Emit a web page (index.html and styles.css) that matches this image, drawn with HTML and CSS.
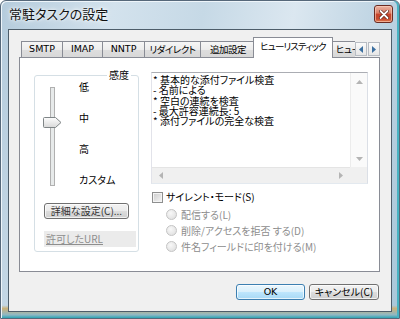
FILE: index.html
```html
<!DOCTYPE html>
<html lang="ja">
<head>
    <meta charset="UTF-8">
    <title>常駐タスクの設定</title>
    <link rel="stylesheet" href="styles.css">
</head>
<body>
    <div class="window">
        <div class="titlebar">
            <span class="title">常駐タスクの設定</span>
            <div class="close">
                <svg width="10" height="9" viewBox="0 0 10 9">
                    <path d="M1.5 1 L8.5 8 M8.5 1 L1.5 8" stroke="#5a1d12" stroke-width="3.2" stroke-linecap="round"/>
                    <path d="M1.5 1 L8.5 8 M8.5 1 L1.5 8" stroke="#fff" stroke-width="1.8" stroke-linecap="round"/>
                </svg>
            </div>
        </div>
        <div class="client">
            <div class="tabrow">
                <div class="tabstrip">
                    <div class="tab latin w-smtp">SMTP</div>
                    <div class="tab latin w-imap">IMAP</div>
                    <div class="tab latin w-nntp">NNTP</div>
                    <div class="tab w-redirect">リダイレクト</div>
                    <div class="tab w-extra">追加設定</div>
                    <div class="tab active">ヒューリスティック</div>
                    <div class="tab cut">ヒュー</div>
                </div>
                <div class="tabscroll">
                    <div class="scrollbtn"><svg width="4" height="7" viewBox="0 0 4 7"><path d="M4 0 L0 3.5 L4 7 Z" fill="#3b6fa0"/></svg></div>
                    <div class="scrollbtn"><svg width="4" height="7" viewBox="0 0 4 7"><path d="M0 0 L4 3.5 L0 7 Z" fill="#3b6fa0"/></svg></div>
                </div>
            </div>
            <div class="panel">
                <div class="leftcol">
                    <div class="group">
                        <span class="group-label">感度</span>
                        <div class="slider">
                            <div class="track">
                                <svg class="thumb" width="19" height="11" viewBox="0 0 19 11">
                                    <defs>
                                        <linearGradient id="tg" x1="0" y1="0" x2="0" y2="1">
                                            <stop offset="0" stop-color="#fdfdfd"/>
                                            <stop offset="1" stop-color="#d9d9d9"/>
                                        </linearGradient>
                                    </defs>
                                    <path d="M1.5 0.5 H12.5 L18 5.5 L12.5 10.5 H1.5 Q0.5 10.5 0.5 9.5 V1.5 Q0.5 0.5 1.5 0.5 Z" fill="url(#tg)" stroke="#7f8587"/>
                                </svg>
                            </div>
                            <div class="levels">
                                <span>低</span>
                                <span>中</span>
                                <span>高</span>
                                <span>カスタム</span>
                            </div>
                        </div>
                        <div class="btn small">詳細な設定(C)...</div>
                        <div class="urlbox"><span>許可したURL</span></div>
                    </div>
                </div>
                <div class="rightcol">
                    <div class="listbox">
                        <div class="listtext">* 基本的な添付ファイル検査
- 名前による
* 空白の連続を検査
- 最大許容連続長: 5
* 添付ファイルの完全な検査</div>
                        <div class="vscroll">
                            <svg width="7" height="4" viewBox="0 0 7 4"><path d="M0 4 L3.5 0 L7 4 Z" fill="#b4b4b4"/></svg>
                            <svg width="7" height="4" viewBox="0 0 7 4"><path d="M0 0 L3.5 4 L7 0 Z" fill="#b4b4b4"/></svg>
                        </div>
                        <div class="hscroll">
                            <svg width="4" height="7" viewBox="0 0 4 7"><path d="M4 0 L0 3.5 L4 7 Z" fill="#b4b4b4"/></svg>
                            <svg width="4" height="7" viewBox="0 0 4 7"><path d="M0 0 L4 3.5 L0 7 Z" fill="#b4b4b4"/></svg>
                        </div>
                        <div class="corner"></div>
                    </div>
                    <label class="check">
                        <span class="checkbox"></span>
                        <span>サイレント・モード(S)</span>
                    </label>
                    <div class="radios">
                        <div class="radio"><span class="dot"></span>配信する(L)</div>
                        <div class="radio"><span class="dot"></span>削除/アクセスを拒否 する(D)</div>
                        <div class="radio"><span class="dot"></span>件名フィールドに印を付ける(M)</div>
                    </div>
                </div>
            </div>
            <div class="buttons">
                <div class="btn default">OK</div>
                <div class="btn">キャンセル(C)</div>
            </div>
        </div>
    </div>
</body>
</html>
```

FILE: styles.css
```css
* {
    box-sizing: border-box;
    margin: 0;
    padding: 0;
}

body {
    width: 400px;
    height: 319px;
    overflow: hidden;
    font-family: "Noto Sans CJK JP", sans-serif;
    font-size: 10px;
    font-feature-settings: "palt";
    color: #000;
    background: #fff;
}

.window {
    width: 400px;
    height: 319px;
    display: flex;
    flex-direction: column;
    padding: 0 7px 6px 7px;
    border: 1px solid #56687a;
    border-radius: 6px 6px 0 0;
    background:
        linear-gradient(to bottom, rgba(255, 255, 255, 0) 96%, #c9b27c 97%, #8fb8c4 99%, #2ea4b4 100%),
        linear-gradient(100deg, #b4cbdc 0%, #d3e2ed 25%, #c6d9e6 45%, #dbe7f0 65%, #bdd3e2 85%, #a9c7d9 100%);
    box-shadow: inset -2px 0 0 #47b3c3, inset 1px 1px 0 #eef5fa;
}

.titlebar {
    height: 28px;
    margin: 0 -7px;
    padding: 4px 6px 0 8px;
    display: flex;
    justify-content: space-between;
    align-items: flex-start;
}

.title {
    font-size: 13px;
    line-height: 17px;
    color: #111;
    text-shadow: 0 0 6px #fff, 0 0 3px #fff;
}

.close {
    width: 19px;
    height: 18px;
    border: 1px solid #6b2b22;
    border-radius: 3px;
    background: linear-gradient(to bottom, #eab3a3 0%, #d97e66 45%, #c7442b 50%, #c54a2f 80%, #e07a4e 100%);
    box-shadow: inset 0 0 0 1px rgba(255, 210, 190, 0.6);
    display: flex;
    align-items: center;
    justify-content: center;
}

.client {
    flex: 1;
    border: 1px solid #4d5d6a;
    background: #f0f0f0;
    padding: 7px 11px 0 10px;
    display: flex;
    flex-direction: column;
}

.tabrow {
    display: flex;
    align-items: flex-end;
    height: 21px;
    position: relative;
    z-index: 1;
}

.tabstrip {
    flex: 1;
    display: flex;
    align-items: flex-end;
    height: 21px;
    padding-left: 2px;
    overflow: hidden;
}

.tab {
    flex-shrink: 0;
    height: 16px;
    margin-bottom: 1px;
    margin-left: -1px;
    border: 1px solid #898c95;
    border-bottom: none;
    background: linear-gradient(to bottom, #f6f6f6 0%, #ececec 50%, #dedede 51%, #d8d8d8 100%);
    font-size: 9.5px;
    letter-spacing: -0.5px;
    line-height: 14px;
    text-align: center;
    white-space: nowrap;
}

.tab:first-child {
    margin-left: 0;
}

.tab.latin {
    font-family: "DejaVu Sans", "Noto Sans CJK JP", sans-serif;
    letter-spacing: 0;
}

.w-smtp { width: 42px; }
.w-imap { width: 41px; }
.w-nntp { width: 43px; }
.w-redirect { width: 57px; }
.w-extra { width: 56px; }

.tab.active {
    width: 80px;
    height: 21px;
    margin: 0 -2px 0 -3px;
    background: #fff;
    line-height: 17px;
    letter-spacing: -0.9px;
    position: relative;
    z-index: 2;
}

.tab.cut {
    width: 40px;
    text-align: left;
    padding-left: 5px;
}

.tabscroll {
    display: flex;
    gap: 1px;
    margin: 0 0 2px 0;
}

.scrollbtn {
    width: 12px;
    height: 14px;
    border: 1px solid #b7bcc3;
    background: linear-gradient(to bottom, #fbfbfb, #e6e6e6);
    display: flex;
    align-items: center;
    justify-content: center;
}

.panel {
    height: 215px;
    margin-top: -1px;
    border: 1px solid #898c95;
    background: #fff;
    display: flex;
    padding-left: 14px;
}

.leftcol {
    width: 105px;
    padding-top: 17px;
}

.group {
    position: relative;
    height: 177px;
    border: 1px solid #d5dfe5;
    border-radius: 3px;
    padding: 5px 0 0 8px;
}

.group-label {
    position: absolute;
    top: -8px;
    right: 7px;
    padding: 0 2px;
    background: #fff;
    line-height: 14px;
}

.slider {
    display: flex;
}

.track {
    position: relative;
    width: 20px;
    height: 105px;
}

.track::before {
    content: "";
    position: absolute;
    left: 7px;
    top: 6px;
    bottom: 0;
    width: 3px;
    border: 1px solid #b0b0b0;
    background: #e7eaea;
}

.thumb {
    position: absolute;
    top: 36px;
    left: 0;
}

.levels {
    display: flex;
    flex-direction: column;
    gap: 19px;
    margin-left: 16px;
}

.levels span {
    line-height: 12px;
    height: 12px;
}

.btn {
    height: 16px;
    border: 1px solid #707070;
    border-radius: 3px;
    background: linear-gradient(to bottom, #f2f2f2 0%, #ebebeb 50%, #dddddd 51%, #cfcfcf 100%);
    box-shadow: inset 0 0 0 1px rgba(255, 255, 255, 0.7);
    text-align: center;
    line-height: 13px;
    font-size: 10px;
}

.btn.small {
    width: 85px;
    margin: 17px 0 0 1px;
    color: #333;
}

.urlbox {
    width: 92px;
    height: 16px;
    margin: 12px 0 0 1px;
    background: #ebebeb;
    padding-left: 2px;
    line-height: 15px;
    color: #8e8e8e;
}

.urlbox span {
    text-decoration: underline;
}

.rightcol {
    margin-left: 12px;
    padding-top: 14px;
}

.listbox {
    width: 217px;
    height: 112px;
    border: 1px solid #abadb3;
    border-color: #abadb3 #dbdfe6 #e3e9ef #e2e3ea;
    display: grid;
    grid-template-columns: 1fr 17px;
    grid-template-rows: 1fr 16px;
}

.listtext {
    white-space: pre;
    line-height: 10.3px;
    padding: 2px 0 0 1px;
}

.vscroll {
    background: #fafafa;
    border-left: 1px solid #ececec;
    display: flex;
    flex-direction: column;
    justify-content: space-between;
    align-items: center;
    padding: 7px 0 6px;
}

.hscroll {
    background: #f0f0f0;
    border-top: 1px solid #e4e4e4;
    display: flex;
    justify-content: space-between;
    align-items: center;
    padding: 0 7px;
}

.corner {
    background: #f0f0f0;
}

.check {
    display: flex;
    align-items: center;
    gap: 3px;
    margin: 7px 0 0 1px;
    line-height: 12px;
}

.checkbox {
    width: 11px;
    height: 11px;
    border: 1px solid #8e8f8f;
    background: linear-gradient(135deg, #cbcbcb, #f6f6f6);
    box-shadow: inset 0 0 0 1px #f4f4f4;
}

.radios {
    display: flex;
    flex-direction: column;
    gap: 4px;
    margin: 5px 0 0 15px;
}

.radio {
    display: flex;
    align-items: center;
    gap: 4px;
    height: 12px;
    color: #8d8d8d;
}

.dot {
    width: 11px;
    height: 11px;
    border: 1px solid #c4c4c4;
    border-radius: 50%;
    background: radial-gradient(circle at 40% 35%, #f8f8f8, #dcdcdc);
}

.buttons {
    display: flex;
    justify-content: flex-end;
    gap: 4px;
    margin: 12px 1px 0 0;
}

.buttons .btn {
    width: 70px;
}

.btn.default {
    width: 69px;
    border-color: #3c7fb1;
    background: linear-gradient(to bottom, #eaf6fd 0%, #d9f0fc 50%, #bee6fd 51%, #a7d9f5 100%);
    font-family: "DejaVu Sans", sans-serif;
    font-size: 9.5px;
}
```
